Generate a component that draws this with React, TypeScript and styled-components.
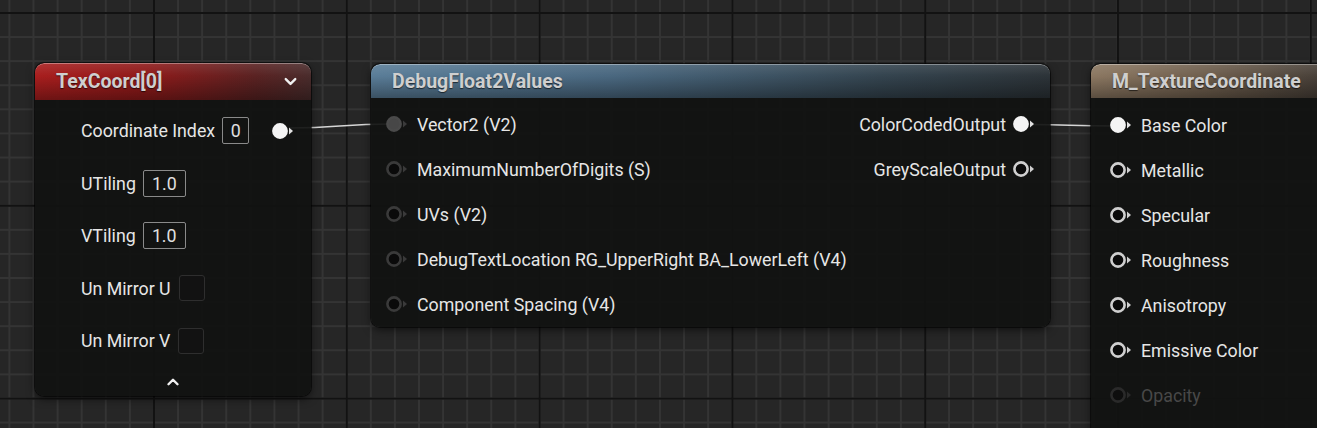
import React from "react";
import styled, { createGlobalStyle, css } from "styled-components";
import { ChevronDown, ChevronUp } from "lucide-react";

type Tone = "red" | "blue" | "brown";
type PinKind = "filled" | "hollow" | "dark" | "grey" | "dim";

const GlobalStyle = createGlobalStyle`
  html, body {
    margin: 0;
    padding: 0;
    background: #262626;
  }
  body {
    font-family: Roboto, "Noto Sans", "Liberation Sans", sans-serif;
    overflow: hidden;
  }
`;

const Canvas = styled.div`
  position: relative;
  width: 1317px;
  height: 428px;
  overflow: hidden;
  background-color: #262626;
  background-image: linear-gradient(90deg, #121212 2px, transparent 2px),
    linear-gradient(180deg, #121212 2px, transparent 2px),
    linear-gradient(90deg, #343434 2px, transparent 2px),
    linear-gradient(180deg, #343434 2px, transparent 2px);
  background-size: 192.8px 100%, 100% 192.8px, 24.1px 100%, 100% 24.1px;
  background-position: 153px 0, 0 12px, 153px 0, 0 12px;
`;

const Wires = styled.svg`
  position: absolute;
  left: 0;
  top: 0;
  width: 1317px;
  height: 428px;
  pointer-events: none;
`;

const Node = styled.div<{ $x: number; $y: number; $w: number; $h: number }>`
  position: absolute;
  left: ${(p) => p.$x}px;
  top: ${(p) => p.$y}px;
  width: ${(p) => p.$w}px;
  height: ${(p) => p.$h}px;
  display: flex;
  flex-direction: column;
  border-radius: 9px;
  background: rgba(17, 18, 17, 0.93);
  box-shadow: 0 0 0 1px rgba(0, 0, 0, 0.55), 0 3px 8px rgba(0, 0, 0, 0.55);
  overflow: hidden;
`;

const shine = `linear-gradient(
  180deg,
  rgba(255, 255, 255, 0.1) 0%,
  rgba(255, 255, 255, 0) 35%,
  rgba(0, 0, 0, 0.35) 100%
)`;

const tones = {
  red: css`
    background: ${shine},
      linear-gradient(90deg, #a81e1e 0%, #8f1a1a 40%, #5a2222 80%, #4a2c2c 100%);
  `,
  blue: css`
    background: ${shine},
      linear-gradient(90deg, #5a7d98 0%, #4a6880 35%, #34444f 75%, #2c3338 100%);
  `,
  brown: css`
    background: ${shine},
      linear-gradient(90deg, #8c7862 0%, #6e5e4d 45%, #3e3833 100%);
  `,
};

const Header = styled.div<{ $tone: Tone; $h: number }>`
  ${(p) => tones[p.$tone]}
  height: ${(p) => p.$h}px;
  flex: none;
  display: flex;
  align-items: center;
  padding: 0 11px 0 21px;
  box-shadow: inset 0 1px 0 rgba(255, 255, 255, 0.35);
  border-radius: 9px 9px 0 0;
`;

const Title = styled.div`
  flex: 1;
  font-size: 19.5px;
  font-weight: 700;
  color: #cfcfcf;
  text-shadow: 0 1px 1px rgba(0, 0, 0, 0.6);
  white-space: nowrap;
`;

const HeaderIcon = styled(ChevronDown)`
  color: #f0f0f0;
`;

const TexBody = styled.div`
  display: flex;
  flex-direction: column;
  gap: 25.5px;
  padding: 17px 17px 0 46px;
`;

const ParamRow = styled.div`
  height: 27px;
  display: flex;
  align-items: center;
`;

const Label = styled.span<{ $dim?: boolean }>`
  font-size: 17.8px;
  color: ${(p) => (p.$dim ? "#484848" : "#e6e6e6")};
  white-space: nowrap;
`;

const ValueBox = styled.div<{ $w: number }>`
  width: ${(p) => p.$w}px;
  height: 27px;
  box-sizing: border-box;
  margin-left: 7px;
  border: 1.5px solid #8a8a8a;
  border-radius: 2px;
  display: flex;
  align-items: center;
  justify-content: center;
  font-size: 17.8px;
  color: #e0e0e0;
`;

const CheckBox = styled.div`
  width: 26px;
  height: 26px;
  box-sizing: border-box;
  margin-left: 8px;
  border: 1.5px solid #2e2e2e;
  border-radius: 3px;
  background: #121212;
`;

const PinSlot = styled.div`
  margin-left: auto;
  display: flex;
`;

const Collapse = styled.div`
  display: flex;
  justify-content: center;
  padding-top: 19px;
  color: #f0f0f0;
`;

const PinsBody = styled.div<{ $pl: number; $pt: number }>`
  display: flex;
  justify-content: space-between;
  padding: ${(p) => p.$pt}px 15px 0 ${(p) => p.$pl}px;
`;

const PinColumn = styled.div<{ $right?: boolean }>`
  display: flex;
  flex-direction: column;
  gap: 15px;
  align-items: ${(p) => (p.$right ? "flex-end" : "flex-start")};
`;

const PinRow = styled.div<{ $right?: boolean }>`
  height: 30px;
  display: flex;
  align-items: center;
  gap: ${(p) => (p.$right ? 7 : 9)}px;
`;

const pinColors: Record<PinKind, [string, string, string]> = {
  filled: ["#f4f4f4", "#f4f4f4", "#e2e2e2"],
  hollow: ["#0a0a0a", "#cfcfcf", "#cfcfcf"],
  dark: ["#0a0a0a", "#3a3a3a", "#3a3a3a"],
  grey: ["#474747", "#4a4a4a", "#3a3a3a"],
  dim: ["#0e0e0e", "#2a2a2a", "#2a2a2a"],
};

const Pin: React.FC<{ kind: PinKind }> = ({ kind }) => {
  const [fill, stroke, tri] = pinColors[kind];
  return (
    <svg width="22" height="16" viewBox="0 0 22 16">
      <circle cx="8" cy="8" r="6.6" fill={fill} stroke={stroke} strokeWidth="2.6" />
      <polygon points="17,4.6 21,8 17,11.4" fill={tri} />
    </svg>
  );
};

const debugInputs: [string, PinKind][] = [
  ["Vector2 (V2)", "grey"],
  ["MaximumNumberOfDigits (S)", "dark"],
  ["UVs (V2)", "dark"],
  ["DebugTextLocation RG_UpperRight BA_LowerLeft (V4)", "dark"],
  ["Component Spacing (V4)", "dark"],
];

const debugOutputs: [string, PinKind][] = [
  ["ColorCodedOutput", "filled"],
  ["GreyScaleOutput", "hollow"],
];

const materialInputs: [string, PinKind][] = [
  ["Base Color", "filled"],
  ["Metallic", "hollow"],
  ["Specular", "hollow"],
  ["Roughness", "hollow"],
  ["Anisotropy", "hollow"],
  ["Emissive Color", "hollow"],
  ["Opacity", "dim"],
];

export default function App() {
  return (
    <Canvas>
      <GlobalStyle />
      <Wires viewBox="0 0 1317 428">
        <path d="M 290 128 C 340 128, 340 124, 392 124" stroke="#d6d6d6" strokeWidth="1.5" fill="none" />
        <path d="M 1030 124.5 C 1070 124.5, 1070 126, 1116 126" stroke="#d6d6d6" strokeWidth="1.5" fill="none" />
      </Wires>

      <Node $x={35} $y={63} $w={276} $h={333}>
        <Header $tone="red" $h={37}>
          <Title>TexCoord[0]</Title>
          <HeaderIcon size={19} strokeWidth={3} />
        </Header>
        <TexBody>
          <ParamRow>
            <Label>Coordinate Index</Label>
            <ValueBox $w={27}>0</ValueBox>
            <PinSlot>
              <Pin kind="filled" />
            </PinSlot>
          </ParamRow>
          <ParamRow>
            <Label>UTiling</Label>
            <ValueBox $w={43}>1.0</ValueBox>
          </ParamRow>
          <ParamRow>
            <Label>VTiling</Label>
            <ValueBox $w={43}>1.0</ValueBox>
          </ParamRow>
          <ParamRow>
            <Label>Un Mirror U</Label>
            <CheckBox />
          </ParamRow>
          <ParamRow>
            <Label>Un Mirror V</Label>
            <CheckBox />
          </ParamRow>
        </TexBody>
        <Collapse>
          <ChevronUp size={18} strokeWidth={3.2} />
        </Collapse>
      </Node>

      <Node $x={371} $y={64} $w={679} $h={263}>
        <Header $tone="blue" $h={34}>
          <Title>DebugFloat2Values</Title>
        </Header>
        <PinsBody $pl={15} $pt={11}>
          <PinColumn>
            {debugInputs.map(([name, kind]) => (
              <PinRow key={name}>
                <Pin kind={kind} />
                <Label>{name}</Label>
              </PinRow>
            ))}
          </PinColumn>
          <PinColumn $right>
            {debugOutputs.map(([name, kind]) => (
              <PinRow key={name} $right>
                <Label>{name}</Label>
                <Pin kind={kind} />
              </PinRow>
            ))}
          </PinColumn>
        </PinsBody>
      </Node>

      <Node $x={1091} $y={64} $w={260} $h={400}>
        <Header $tone="brown" $h={34}>
          <Title>M_TextureCoordinate</Title>
        </Header>
        <PinsBody $pl={19} $pt={12}>
          <PinColumn>
            {materialInputs.map(([name, kind]) => (
              <PinRow key={name}>
                <Pin kind={kind} />
                <Label $dim={kind === "dim"}>{name}</Label>
              </PinRow>
            ))}
          </PinColumn>
        </PinsBody>
      </Node>
    </Canvas>
  );
}
